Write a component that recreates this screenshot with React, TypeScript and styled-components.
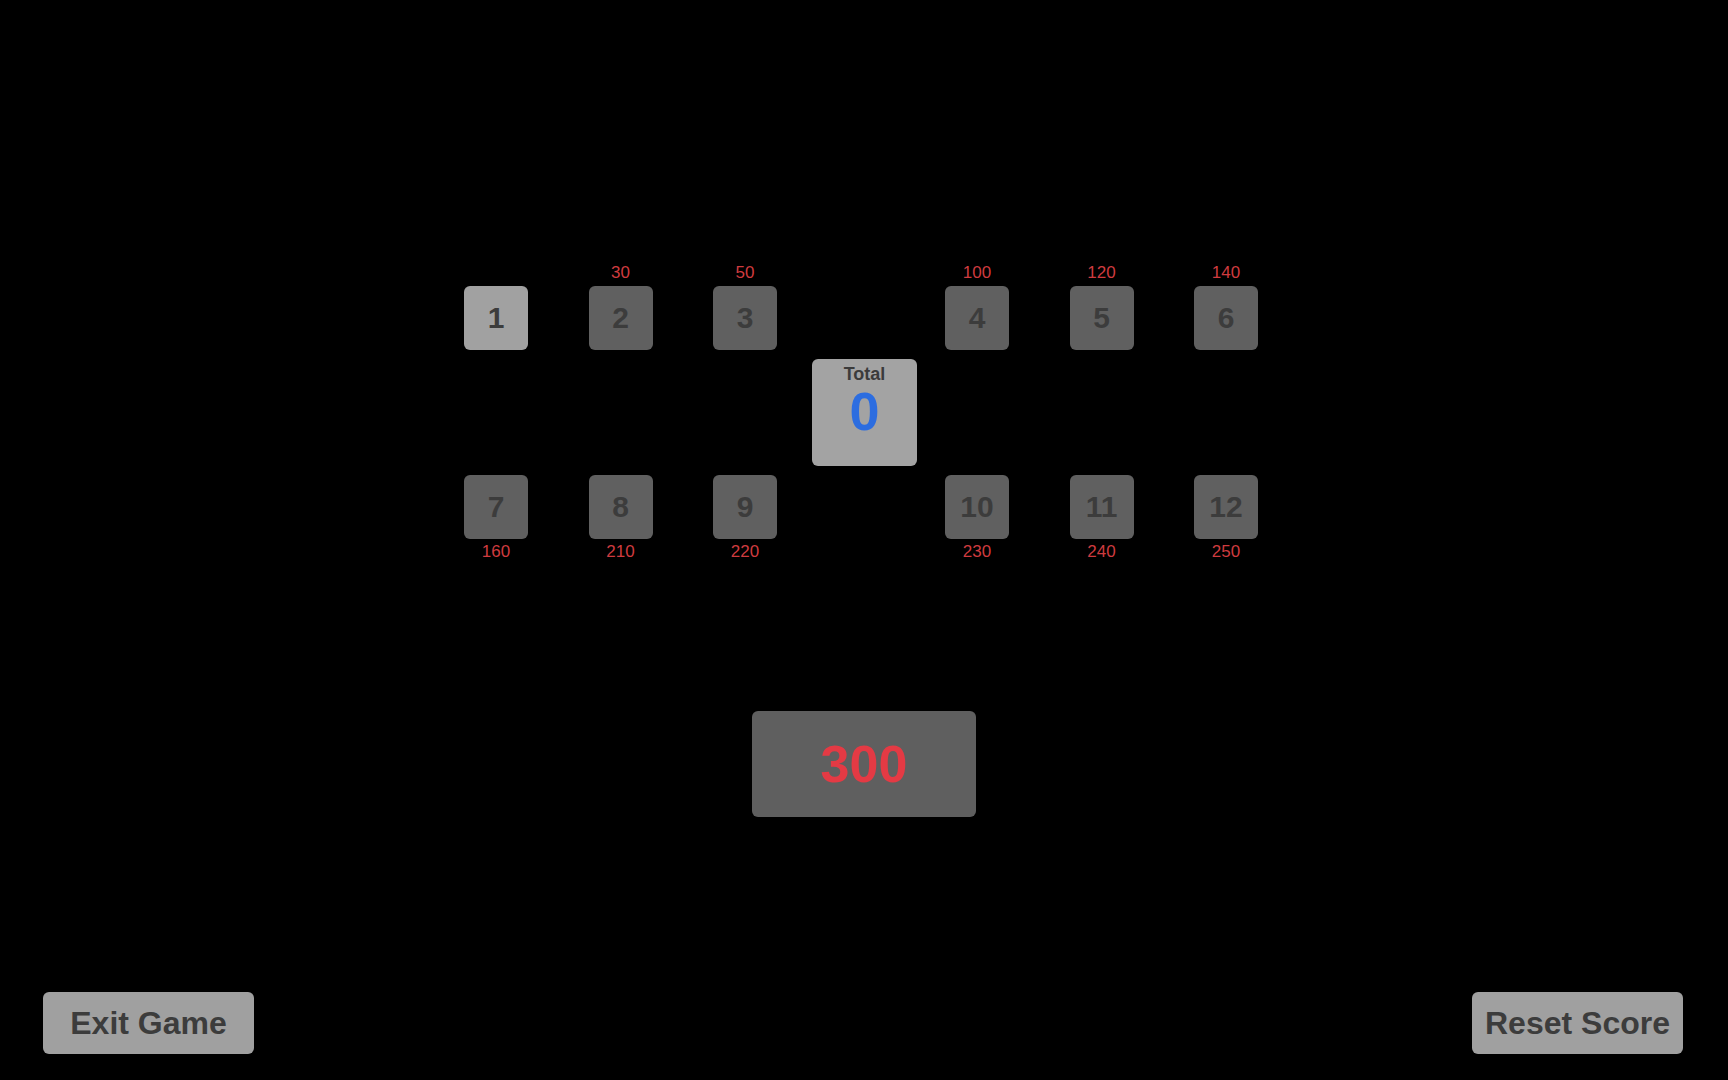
import React from 'react';
import styled, { createGlobalStyle } from 'styled-components';

const GlobalStyle = createGlobalStyle`
  html, body {
    margin: 0;
    padding: 0;
    background: #000;
  }
  body {
    font-family: "Liberation Sans", Arial, sans-serif;
  }
`;

type TileData = { n: number; score?: number | null; active?: boolean };

const topLeft: TileData[] = [
  { n: 1, score: null, active: true },
  { n: 2, score: 30 },
  { n: 3, score: 50 },
];
const topRight: TileData[] = [
  { n: 4, score: 100 },
  { n: 5, score: 120 },
  { n: 6, score: 140 },
];
const bottomLeft: TileData[] = [
  { n: 7, score: 160 },
  { n: 8, score: 210 },
  { n: 9, score: 220 },
];
const bottomRight: TileData[] = [
  { n: 10, score: 230 },
  { n: 11, score: 240 },
  { n: 12, score: 250 },
];

const Page = styled.div`
  min-height: 100vh;
  width: 100%;
  display: flex;
  flex-direction: column;
  align-items: center;
  box-sizing: border-box;
  padding-top: 264px;
`;

const Board = styled.div`
  display: grid;
  grid-template-columns: 313px 168px 312px;
  row-gap: 9px;
  margin-left: -7px;
`;

const TileGroup = styled.div`
  display: flex;
  gap: 60.5px;
`;

const TileCell = styled.div<{ $labelBelow?: boolean }>`
  display: flex;
  flex-direction: ${p => (p.$labelBelow ? 'column-reverse' : 'column')};
  align-items: center;
  gap: ${p => (p.$labelBelow ? '4px' : '4px')};
`;

const ScoreLabel = styled.span`
  height: 18px;
  line-height: 18px;
  font-size: 17px;
  color: #cf3b3f;
`;

const Tile = styled.button<{ $active?: boolean }>`
  width: 64px;
  height: 64px;
  border: none;
  border-radius: 6px;
  padding: 0;
  background: ${p => (p.$active ? '#a1a1a1' : '#606060')};
  color: #3c3c3c;
  font-family: "Liberation Sans", Arial, sans-serif;
  font-size: 30px;
  font-weight: bold;
  display: flex;
  align-items: center;
  justify-content: center;
  cursor: pointer;
`;

const CenterCell = styled.div`
  display: flex;
  justify-content: center;
  padding-left: 7px;
`;

const TotalBox = styled.div`
  width: 105px;
  height: 107px;
  box-sizing: border-box;
  border-radius: 6px;
  background: #a3a3a3;
  display: flex;
  flex-direction: column;
  align-items: center;
  padding-top: 6px;
`;

const TotalLabel = styled.span`
  font-size: 18px;
  line-height: 18px;
  font-weight: bold;
  color: #3b3b3b;
`;

const TotalValue = styled.span`
  font-size: 54px;
  line-height: 1;
  font-weight: bold;
  color: #2c6de0;
  margin-top: 1px;
`;

const TargetBox = styled.div`
  margin-top: 150px;
  width: 224px;
  height: 106px;
  border-radius: 6px;
  background: #5f5f5f;
  display: flex;
  align-items: center;
  justify-content: center;
  font-size: 52px;
  font-weight: bold;
  color: #e43a44;
`;

const Footer = styled.div`
  margin-top: auto;
  width: 100%;
  box-sizing: border-box;
  display: flex;
  justify-content: space-between;
  padding: 0 45px 26px 43px;
`;

const ActionButton = styled.button`
  width: 211px;
  height: 62px;
  border: none;
  border-radius: 6px;
  background: #a0a0a0;
  color: #3c3c3c;
  font-family: "Liberation Sans", Arial, sans-serif;
  font-size: 32px;
  font-weight: bold;
  padding: 0;
  cursor: pointer;
`;

const Row = ({ tiles, below }: { tiles: TileData[]; below?: boolean }) => (
  <TileGroup>
    {tiles.map(t => (
      <TileCell key={t.n} $labelBelow={below}>
        <ScoreLabel>{t.score ?? ''}</ScoreLabel>
        <Tile $active={t.active}>{t.n}</Tile>
      </TileCell>
    ))}
  </TileGroup>
);

const App: React.FC = () => {
  return (
    <>
      <GlobalStyle />
      <Page>
        <Board>
          <Row tiles={topLeft} />
          <div />
          <Row tiles={topRight} />
          <div />
          <CenterCell>
            <TotalBox>
              <TotalLabel>Total</TotalLabel>
              <TotalValue>0</TotalValue>
            </TotalBox>
          </CenterCell>
          <div />
          <Row tiles={bottomLeft} below />
          <div />
          <Row tiles={bottomRight} below />
        </Board>
        <TargetBox>300</TargetBox>
        <Footer>
          <ActionButton>Exit Game</ActionButton>
          <ActionButton>Reset Score</ActionButton>
        </Footer>
      </Page>
    </>
  );
};

export default App;
